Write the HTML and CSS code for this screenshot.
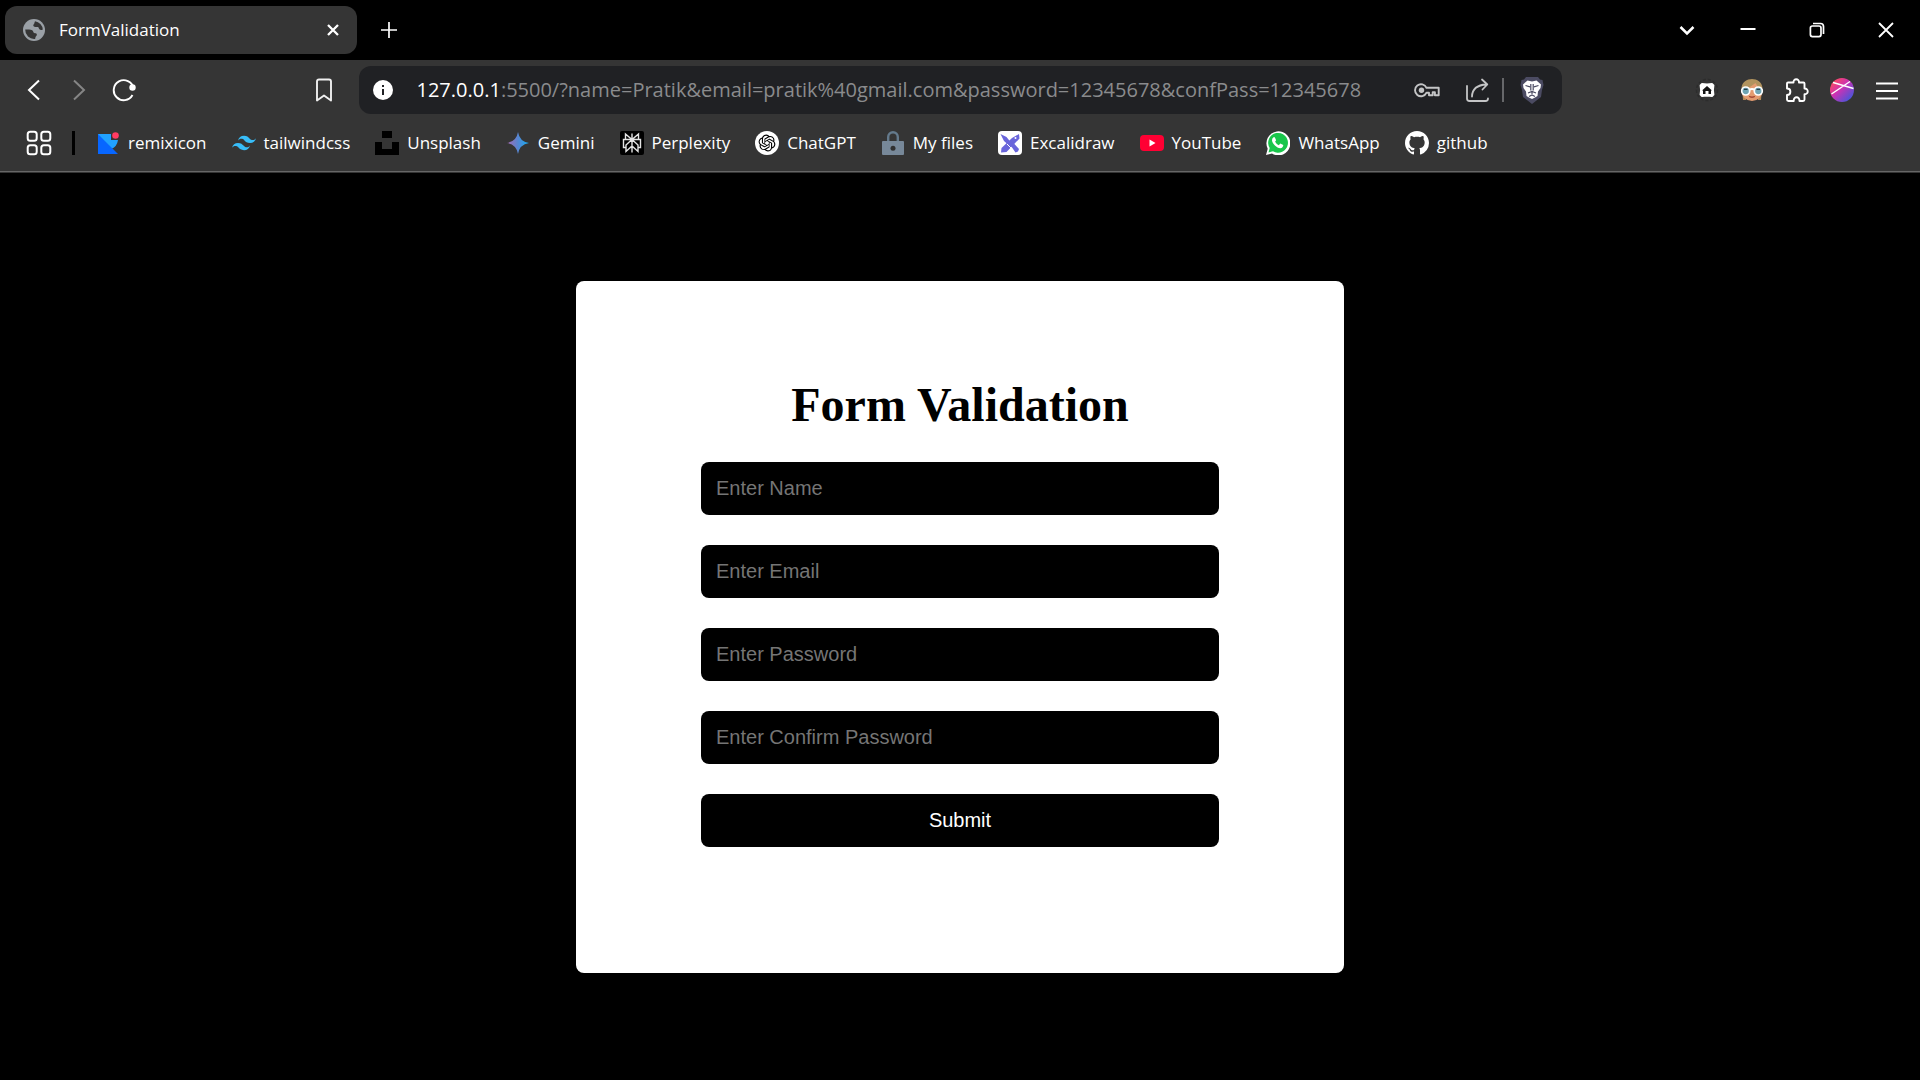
FILE: index.html
```html
<!DOCTYPE html>
<html lang="en">
<head>
<meta charset="utf-8">
<title>FormValidation</title>
<meta name="viewport" content="width=device-width, initial-scale=1">
<link rel="stylesheet" href="styles.css">
</head>
<body>
<header class="browser">
  <div class="tabstrip">
    <div class="tab">
      <svg class="tab-icon" viewBox="0 0 22 22" width="22" height="22"><circle cx="11" cy="11" r="11" fill="#9aa0a6"/><path d="M12 2.200a9 9 0 0 1 7.800 8.300c-1.200.8-2.600.7-3.400-.2-.9-1-.4-2-1.600-2.300-1.400-.3-3.400.2-4.200-.8-.9-1.200.3-2 .7-2.800.3-.8.3-1.500.7-2.200zM2.200 10.600c2.300.2 5.300-.2 7 .7 1.300.8.8 2.300 2 2.700 1 .3 2.200 0 2.600 1.200.4 1.400-1 1.900-1.300 2.800-.2.700 0 1.300-.5 1.900A9 9 0 0 1 2.200 10.600z" fill="#353535"/></svg>
      <span class="tab-title">FormValidation</span>
      <button class="tab-close" type="button" aria-label="Close tab"><svg viewBox="0 0 12 12" width="12" height="12"><path d="M1 1l10 10M11 1L1 11" stroke="#fff" stroke-width="2.300"/></svg></button>
    </div>
    <button class="new-tab" type="button" aria-label="New tab"><svg viewBox="0 0 16 16" width="16" height="16"><path d="M8 0v16M0 8h16" stroke="#fff" stroke-width="1.700"/></svg></button>
    <div class="window-controls">
      <button class="tab-search" type="button" aria-label="Search tabs"><svg viewBox="0 0 16 16" width="16" height="16"><path d="M1.500 5L8 11.500 14.500 5" fill="none" stroke="#fff" stroke-width="2.500"/></svg></button>
      <button class="window-button" type="button" aria-label="Minimize"><svg viewBox="0 0 16 16" width="16" height="16"><path d="M.5 7h15" stroke="#fff" stroke-width="2"/></svg></button>
      <button class="window-button" type="button" aria-label="Restore"><svg viewBox="0 0 16 16" width="16" height="16" fill="none" stroke="#fff" stroke-width="1.700"><rect x="1.400" y="4" width="10.600" height="10.600" rx="2"/><path d="M4 1.500h7.500a3 3 0 0 1 3 3V12"/></svg></button>
      <button class="window-button" type="button" aria-label="Close"><svg viewBox="0 0 16 16" width="16" height="16"><path d="M1 1l14 14M15 1L1 15" stroke="#fff" stroke-width="1.800"/></svg></button>
    </div>
  </div>

  <div class="toolbar">
    <nav class="toolbar-start" aria-label="Navigation">
      <button class="tool" type="button" aria-label="Back"><svg viewBox="0 0 24 24" width="24" height="24"><path d="M17 2.500L7 12l10 9.500" fill="none" stroke="#fff" stroke-width="2"/></svg></button>
      <button class="tool" type="button" aria-label="Forward" disabled><svg viewBox="0 0 24 24" width="24" height="24"><path d="M7 2.500L17 12 7 21.500" fill="none" stroke="#858585" stroke-width="2"/></svg></button>
      <button class="tool" type="button" aria-label="Reload"><svg viewBox="0 0 24 24" width="24" height="24"><path d="M21.500 10A10 10 0 1 0 20.500 17" fill="none" stroke="#fff" stroke-width="1.900"/><circle cx="20.500" cy="9.500" r="3.200" fill="#fff"/></svg></button>
      <button class="tool tool-end" type="button" aria-label="Bookmark this page"><svg viewBox="0 0 24 24" width="24" height="24"><path d="M6 1.500h10q2 0 2 2v19l-7-5-7 5v-19q0-2 2-2z" fill="none" stroke="#f0f0f0" stroke-width="1.900" stroke-linejoin="round"/></svg></button>
    </nav>
    <div class="omnibox">
      <svg class="site-info" viewBox="0 0 20 20" width="20" height="20"><circle cx="10" cy="10" r="10" fill="#fff"/><path d="M9 5h2v2H9zM9 9h2v6H9z" fill="#202124"/></svg>
      <div class="url" role="textbox" aria-label="Address" contenteditable="true" spellcheck="false"><span class="url-host">127.0.0.1</span>:5500/?name=Pratik&amp;email=pratik%40gmail.com&amp;password=12345678&amp;confPass=12345678</div>
      <button class="omni-button" type="button" aria-label="Passwords"><svg viewBox="0 0 26 26" width="26" height="26"><path d="M12.500 10.800h12.200v7.500h-3.800v-3h-2.200v3H15v-2.600h-2.500a6 6 0 1 1 0-4.900z" fill="none" stroke="#c4c5c6" stroke-width="1.900" stroke-linejoin="round"/><circle cx="7.500" cy="13.200" r="2.700" fill="#c4c5c6"/></svg></button>
      <button class="omni-button" type="button" aria-label="Share"><svg viewBox="0 0 26 26" width="26" height="26" fill="none" stroke="#c4c5c6" stroke-width="1.800" stroke-linecap="round" stroke-linejoin="round"><path d="M3 9v12.500q0 2.500 2.500 2.500h16q2.500 0 2.500-2.500"/><path d="M8 19.500c.2-7 4.500-11.500 14.500-12M18 2.500L23.300 7.500l-4.800 5"/></svg></button>
      <span class="omni-divider"></span>
      <button class="omni-button shield" type="button" aria-label="Shields"><svg viewBox="0 0 24 28" width="24" height="28"><path d="M6 1h12l2 2.500 2.500.5 1 5-1.500 5-1 7-9 7-9-7-1-7L.5 9l1-5L4 3.500z" fill="#4b4b62"/><path d="M7.500 4.500L12 5.500l4.500-1 4.500 4-.5 3.500-2.500 3.500-.5 4.500-2.500 1.500L12 23l-3-1.500L6.500 20 6 15.500 3.500 12 3 8.500z" fill="#fff"/><path d="M5.500 9.500l4.500 1.300M18.500 9.500L14 10.800M10.800 8v6.500M13.200 8v6.500M8 17l4-1.500 4 1.500M12 15.500V18M9 20.500l3-1.500 3 1.500" fill="none" stroke="#4b4b62" stroke-width="1.200"/></svg></button>
    </div>
    <div class="toolbar-end">
      <button class="tool" type="button" aria-label="Home extension"><svg viewBox="0 0 24 24" width="24" height="24"><circle cx="12" cy="12" r="10.500" fill="none" stroke="#2c2c2c" stroke-width="1.500" stroke-dasharray="3 2"/><path d="M7 6l5 .5 5-.5 1.500 1.500-.5 4.500.5 4.500L17 18l-5-.5-5 .5-1.500-1.500L6 12l-.5-4.500z" fill="#fff" stroke="#fff" stroke-width="1.800" stroke-linejoin="round"/><path d="M12 8l5 4.500h-1V16h-2.500v-3h-3v3H8v-3.500H7z" fill="#151515"/></svg></button>
      <button class="tool" type="button" aria-label="Avatar extension"><svg viewBox="0 0 24 24" width="24" height="24"><path d="M2 9h4v13H3zM18 9h4l-1 13h-3z" fill="#b38958"/><circle cx="12" cy="12.500" r="10.500" fill="#e39b70"/><path d="M1.500 10C2 4 7 1 12 1s10 3 10.500 9h-4l-3-5-7 5z" fill="#b1935e"/><path d="M9 18.500q3 1 6 0-3 2-6 0z" fill="#a84d38" stroke="#a84d38"/><path d="M9 12q3-2 6 0" fill="none" stroke="#fff" stroke-width="2"/><circle cx="5.700" cy="13" r="4" fill="#6fa5b4" stroke="#fff" stroke-width="1.700"/><circle cx="18.300" cy="13" r="4" fill="#6fa5b4" stroke="#fff" stroke-width="1.700"/><path d="M4 11.300h3.500M16.500 11.300H20" stroke="#253c49" stroke-width="1.300"/></svg></button>
      <button class="tool" type="button" aria-label="Extensions"><svg viewBox="0 0 24 24" width="24" height="24"><path d="M3 4.500h5.500C8 .2 14.500.2 14 4.500h4.500q1 0 1 1v5c4.300-.2 4.300 6 0 5.800v5.200q0 1.500-1.500 1.500h-3.500c.2-5-6-5-5.800 0H3.500Q2 23 2 21.500v-4.500c4.500 0 4.500-6.500 0-6.500v-5q0-1 1-1z" fill="none" stroke="#fff" stroke-width="1.900" stroke-linejoin="round"/></svg></button>
      <button class="tool" type="button" aria-label="Profile"><svg viewBox="0 0 24 24" width="24" height="24"><defs><linearGradient id="profile" x1="0" y1="0" x2="1" y2="1"><stop offset=".1" stop-color="#ff4a5b"/><stop offset=".45" stop-color="#cb32b4"/><stop offset=".9" stop-color="#4057dc"/></linearGradient></defs><circle cx="12" cy="12" r="12" fill="url(#profile)"/><path d="M3 4.500l20.500 6M1.500 16L20 3.500" stroke="#fff" stroke-width="1.400"/></svg></button>
      <button class="tool" type="button" aria-label="Menu"><svg viewBox="0 0 24 24" width="24" height="24"><path d="M1 5.500h22M1 13h22M1 20.500h22" stroke="#fff" stroke-width="1.800"/></svg></button>
    </div>
  </div>

  <nav class="bookmarks" aria-label="Bookmarks">
    <button class="apps" type="button" aria-label="Apps"><svg viewBox="0 0 26 26" width="26" height="26" fill="none" stroke="#fff" stroke-width="2"><rect x="1.700" y="1.700" width="9" height="9" rx="2.500"/><rect x="15.300" y="1.700" width="9" height="9" rx="2.500"/><rect x="1.700" y="15.300" width="9" height="9" rx="2.500"/><rect x="15.300" y="15.300" width="9" height="9" rx="2.500"/></svg></button>
    <span class="bookmark-divider"></span>
    <a class="bookmark" href="#"><svg viewBox="0 0 24 24" width="24" height="24"><defs><linearGradient id="remix" x1="0" y1="0" x2="0" y2="1"><stop stop-color="#18a0ff"/><stop offset="1" stop-color="#075cf5"/></linearGradient></defs><path d="M2 3h13v6h7q-1 7-7 9l6 5H2z" fill="#21a2ff"/><path d="M2 3l20 20H2z" fill="url(#remix)"/><path d="M2 3v20h19z" fill="#0766ff"/><circle cx="19.500" cy="4.500" r="3.300" fill="#ff3b62"/></svg>remixicon</a>
    <a class="bookmark" href="#"><svg viewBox="0 0 24 24" width="24" height="24"><path d="M12 4.800c-3.200 0-5.200 1.600-6 4.800 1.200-1.600 2.600-2.200 4.200-1.800.913.228 1.565.89 2.288 1.624C13.666 10.618 15.027 12 18 12c3.200 0 5.200-1.600 6-4.800-1.200 1.600-2.600 2.200-4.200 1.800-.913-.228-1.565-.89-2.288-1.624C16.337 6.182 14.976 4.800 12 4.800zM6 12c-3.200 0-5.200 1.600-6 4.800 1.200-1.600 2.600-2.200 4.200-1.800.913.228 1.565.89 2.288 1.624C7.666 17.818 9.027 19.200 12 19.200c3.200 0 5.200-1.600 6-4.800-1.200 1.600-2.600 2.200-4.200 1.800-.913-.228-1.565-.89-2.288-1.624C10.337 13.382 8.976 12 6 12z" fill="#38bdf8"/></svg>tailwindcss</a>
    <a class="bookmark" href="#"><svg viewBox="0 0 24 24" width="24" height="24"><path d="M7 0h10v7H7zM0 11h7v7h10v-7h7v13H0z"/></svg>Unsplash</a>
    <a class="bookmark" href="#"><svg viewBox="0 0 24 24" width="24" height="24"><defs><linearGradient id="gemini"><stop stop-color="#a66ab1"/><stop offset=".5" stop-color="#5686d2"/><stop offset="1" stop-color="#12aef5"/></linearGradient></defs><path d="M12 1q1.500 9.500 11 11-9.500 1.500-11 11Q10.500 13.500 1 12q9.500-1.500 11-11z" fill="url(#gemini)"/></svg>Gemini</a>
    <a class="bookmark" href="#"><svg viewBox="0 0 24 24" width="24" height="24"><rect width="24" height="24" rx="2"/><path d="M12 2.500v19M5.500 3v5.500h13V3L12 8.500zM12 8.500l-6 5.500v6.500l6-5.500 6 5.500V14zM6 16.500H3.500v-8h17v8H18" fill="none" stroke="#e4e4e4" stroke-width="1.400"/></svg>Perplexity</a>
    <a class="bookmark" href="#"><svg viewBox="0 0 24 24" width="24" height="24"><circle cx="12" cy="12" r="12" fill="#fff"/><path transform="translate(3.600 3.600) scale(.7)" d="M22.282 9.821a5.985 5.985 0 0 0-.516-4.910 6.046 6.046 0 0 0-6.510-2.900A6.065 6.065 0 0 0 4.981 4.182a5.985 5.985 0 0 0-3.998 2.900 6.046 6.046 0 0 0 .743 7.097 5.980 5.980 0 0 0 .511 4.911 6.051 6.051 0 0 0 6.515 2.900A5.985 5.985 0 0 0 13.260 24a6.056 6.056 0 0 0 5.772-4.206 5.989 5.989 0 0 0 3.998-2.900 6.056 6.056 0 0 0-.748-7.073zm-9.022 12.608a4.476 4.476 0 0 1-2.876-1.041l.142-.080 4.778-2.758a.795.795 0 0 0 .393-.681v-6.737l2.020 1.169a.071.071 0 0 1 .038.052v5.583a4.504 4.504 0 0 1-4.495 4.494zm-9.661-4.125a4.471 4.471 0 0 1-.535-3.014l.142.085 4.783 2.758a.771.771 0 0 0 .781 0l5.843-3.369v2.332a.080.080 0 0 1-.033.062L9.740 19.950a4.499 4.499 0 0 1-6.141-1.646zM2.341 7.896a4.485 4.485 0 0 1 2.366-1.973V11.600a.766.766 0 0 0 .388.677l5.814 3.354-2.020 1.169a.076.076 0 0 1-.071 0l-4.830-2.787A4.504 4.504 0 0 1 2.341 7.872zm16.596 3.855L13.104 8.364 15.119 7.200a.076.076 0 0 1 .071 0l4.830 2.791a4.494 4.494 0 0 1-.677 8.104v-5.677a.790.790 0 0 0-.407-.667zm2.011-3.023l-.142-.085-4.774-2.782a.776.776 0 0 0-.785 0L9.409 9.230V6.897a.066.066 0 0 1 .028-.062l4.830-2.787a4.499 4.499 0 0 1 6.680 4.660zM8.307 12.863l-2.020-1.164a.080.080 0 0 1-.038-.057V6.074a4.499 4.499 0 0 1 7.376-3.454l-.142.081L8.704 5.459a.795.795 0 0 0-.393.681zm1.097-2.365l2.602-1.500 2.607 1.500v2.999l-2.597 1.500-2.607-1.500z"/></svg>ChatGPT</a>
    <a class="bookmark" href="#"><svg viewBox="0 0 24 24" width="24" height="24"><path d="M7.200 11V6a4.800 4.800 0 0 1 9.600 0v5" fill="none" stroke="#647a8c" stroke-width="2.400"/><rect x="1" y="10" width="22" height="14" rx="1" fill="#778899"/><circle cx="12" cy="17.300" r="2.500" fill="#303030"/></svg>My files</a>
    <a class="bookmark" href="#"><svg viewBox="0 0 24 24" width="24" height="24"><rect width="24" height="24" rx="4" fill="#fff"/><g fill="#6965db"><path d="M14 7l7-4 .5 4.500L8.500 21 3 21.500 3.500 17z"/><path d="M2.500 3l6 3 4 5-2.500 2.500-4-3.500zM13 15l3-2.500 5 5.500-1 2.500-2.500 1z"/></g><path d="M9 13l4 4" stroke="#fff"/><circle cx="17.500" cy="7" r="1" fill="#fff"/></svg>Excalidraw</a>
    <a class="bookmark" href="#"><svg viewBox="0 0 24 24" width="24" height="24"><rect y="4" width="24" height="16" rx="4" fill="#ff0033"/><path d="M9.500 8.500v7l6-3.500z" fill="#fff"/></svg>YouTube</a>
    <a class="bookmark" href="#"><svg viewBox="0 0 24 24" width="24" height="24"><path d="M0 24l1.700-6.200A12 12 0 1 1 6 22.500z" fill="#fff"/><path d="M2.500 21.500l1.200-4.400a9.900 9.900 0 1 1 3.300 3.200z" fill="#19c64b"/><path d="M7.500 6.300h1.300l1.300 3-1 1.500q1.200 2.300 3.700 3.400l1.500-1.700 3 1.500q-.2 3-3 3.300c-3.500-.2-8-4.300-8.300-8q0-2 1.500-3z" fill="#fff"/></svg>WhatsApp</a>
    <a class="bookmark" href="#"><svg viewBox="0 0 16 16" width="24" height="24"><path fill="#fff" d="M8 0C3.580 0 0 3.580 0 8c0 3.540 2.290 6.530 5.470 7.590.4.070.55-.17.55-.38 0-.19-.01-.82-.01-1.490-2.010.37-2.530-.49-2.690-.94-.09-.23-.48-.94-.82-1.130-.28-.15-.68-.52-.01-.53.63-.01 1.080.58 1.230.82.72 1.210 1.870.87 2.330.66.070-.52.28-.87.510-1.070-1.780-.2-3.640-.89-3.640-3.950 0-.87.31-1.590.82-2.150-.08-.2-.36-1.020.08-2.120 0 0 .67-.21 2.200.82.64-.18 1.320-.27 2-.27s1.360.09 2 .27c1.530-1.040 2.200-.82 2.200-.82.44 1.100.16 1.920.08 2.120.51.56.82 1.270.82 2.150 0 3.070-1.870 3.750-3.650 3.950.29.25.54.73.54 1.480 0 1.070-.01 1.930-.01 2.200 0 .21.15.46.55.38A8 8 0 0 0 16 8c0-4.420-3.580-8-8-8z"/></svg>github</a>
  </nav>
</header>

<main class="page">
  <form class="card" onsubmit="return false">
    <h1 class="card-title">Form Validation</h1>
    <input class="field" type="text" name="name" placeholder="Enter Name" aria-label="Enter Name">
    <input class="field" type="email" name="email" placeholder="Enter Email" aria-label="Enter Email">
    <input class="field" type="password" name="password" placeholder="Enter Password" aria-label="Enter Password">
    <input class="field" type="password" name="confPass" placeholder="Enter Confirm Password" aria-label="Enter Confirm Password">
    <button class="field submit" type="submit">Submit</button>
  </form>
</main>
</body>
</html>
```
FILE: styles.css
```css
* {
  box-sizing: border-box;
  margin: 0;
  padding: 0;
}

body {
  min-height: 100vh;
  display: flex;
  flex-direction: column;
  background: #000;
  color: #fff;
  font-family: "Open Sans", "Noto Sans", sans-serif;
  font-size: 17px;
  line-height: 22px;
}

button {
  display: flex;
  align-items: center;
  justify-content: center;
  border: 0;
  background: none;
  color: inherit;
}

svg {
  display: block;
  flex: none;
}

.browser {
  padding-bottom: 1px;
  background: #353535;
}

.tabstrip {
  display: flex;
  align-items: center;
  height: 60px;
  padding-left: 5px;
  background: #000;
}

.tab {
  display: flex;
  align-items: center;
  gap: 14px;
  width: 352px;
  height: 48px;
  padding: 0 18px;
  border-radius: 12px;
  background: #353535;
}

.tab-title {
  flex: 1;
}

.new-tab {
  width: 64px;
  height: 48px;
}

.window-controls {
  display: flex;
  margin-left: auto;
}

.tab-search {
  width: 52px;
  height: 60px;
}

.window-button {
  width: 69px;
  height: 60px;
}

.toolbar {
  display: grid;
  grid-template-columns: 1fr minmax(0, 1203px) 1fr;
  align-items: center;
  height: 60px;
}

.toolbar-start,
.toolbar-end {
  display: flex;
  padding: 0 11px;
}

.toolbar-end {
  justify-content: flex-end;
}

.tool {
  width: 45px;
  height: 48px;
}

.tool-end {
  margin-left: auto;
}

.omnibox {
  display: flex;
  align-items: center;
  height: 48px;
  padding: 0 14px;
  border-radius: 12px;
  background: #202124;
}

.url {
  flex: 1;
  min-width: 0;
  margin-left: 24px;
  overflow: hidden;
  white-space: nowrap;
  color: #8a8b8d;
  font-size: 20px;
  line-height: 28px;
  outline: 0;
}

.url-host {
  color: #fff;
}

.omni-button {
  width: 50px;
  height: 48px;
}

.omni-divider {
  width: 2px;
  height: 24px;
  background: #66676a;
}

.shield {
  width: 44px;
  margin-left: 6px;
  margin-right: -6px;
}

.bookmarks {
  display: flex;
  align-items: center;
  height: 52px;
  padding: 0 26px 5px;
  border-bottom: 1px solid #666;
}

.bookmark-divider {
  width: 3px;
  height: 24px;
  margin: 0 21px 0 20px;
  background: #000;
}

.bookmark {
  display: flex;
  align-items: center;
  gap: 8px;
  margin-right: 25px;
  color: #fff;
  text-decoration: none;
  white-space: nowrap;
}

.page {
  flex: 1;
  display: flex;
  align-items: center;
  justify-content: center;
}

.card {
  display: flex;
  flex-direction: column;
  gap: 30px;
  width: 40%;
  padding: 97px 125px 126px;
  border-radius: 8px;
  background: #fff;
}

.card-title {
  color: #000;
  font-family: "Liberation Serif", serif;
  font-size: 48px;
  line-height: 54px;
  text-align: center;
}

.field {
  width: 100%;
  height: 53px;
  padding: 0 15px;
  border: 0;
  border-radius: 8px;
  background: #000;
  color: #fff;
  font-family: "Liberation Sans", sans-serif;
  font-size: 20px;
}

.field::placeholder {
  color: #757575;
}
```
